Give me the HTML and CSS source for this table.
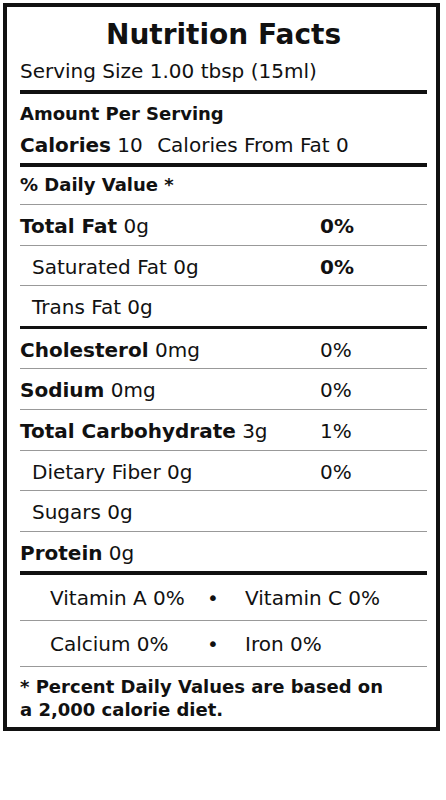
FILE: index.html
```html
<!DOCTYPE html>
<html>
<head>
  <title>Nutrition Facts</title>
  <link rel="stylesheet" href="styles.css">
</head>
<body>
  <div class="label">
    <h1 class="title">Nutrition Facts</h1>
    <div class="serving">Serving Size 1.00 tbsp (15ml)</div>

    <div class="amount">
      <div class="amount-head">Amount Per Serving</div>
      <div class="calories"><b>Calories</b> 10 <span class="fat-cal">Calories From Fat 0</span></div>
    </div>

    <div class="dv-head">% Daily Value *</div>

    <div class="row"><span><b>Total Fat</b> 0g</span><b>0%</b></div>
    <div class="row sub"><span>Saturated Fat 0g</span><b>0%</b></div>
    <div class="row sub"><span>Trans Fat 0g</span><span></span></div>
    <div class="row thick"><span><b>Cholesterol</b> 0mg</span><span>0%</span></div>
    <div class="row"><span><b>Sodium</b> 0mg</span><span>0%</span></div>
    <div class="row"><span><b>Total Carbohydrate</b> 3g</span><span>1%</span></div>
    <div class="row sub"><span>Dietary Fiber 0g</span><span>0%</span></div>
    <div class="row sub"><span>Sugars 0g</span><span></span></div>
    <div class="row"><span><b>Protein</b> 0g</span><span></span></div>

    <div class="vit-row first">
      <span>Vitamin A 0%</span><span class="dot">&bull;</span><span class="vit-right">Vitamin C 0%</span>
    </div>
    <div class="vit-row">
      <span>Calcium 0%</span><span class="dot">&bull;</span><span class="vit-right">Iron 0%</span>
    </div>

    <div class="note">* Percent Daily Values are based on<br>a 2,000 calorie diet.</div>
  </div>
</body>
</html>
```

FILE: styles.css
```css
body {
  margin: 0;
  background: #fff;
  color: #111;
  font-family: "DejaVu Sans", sans-serif;
}
.label {
  width: 437px;
  margin: 3px;
  padding: 11px 9px 6px 13px;
  border: 4px solid #111;
  box-sizing: border-box;
}
.title {
  margin: 0;
  font-size: 28px;
  line-height: 34px;
  font-weight: bold;
  text-align: center;
}
.serving {
  margin-top: 7px;
  padding-bottom: 7px;
  font-size: 20px;
  line-height: 24px;
  border-bottom: 4px solid #111;
}
.amount {
  padding: 9px 0 6px;
  border-bottom: 4px solid #111;
}
.amount-head {
  font-size: 18px;
  line-height: 22px;
  font-weight: bold;
}
.calories {
  margin-top: 8px;
  font-size: 20px;
  line-height: 24px;
}
.fat-cal {
  margin-left: 8px;
}
.dv-head {
  padding: 7px 0 8px;
  font-size: 18px;
  line-height: 22px;
  font-weight: bold;
}
.row {
  display: grid;
  grid-template-columns: 300px 1fr;
  padding: 9px 0 6.6px;
  font-size: 20px;
  line-height: 24px;
  border-top: 1px solid #999;
}
.row.sub span:first-child {
  padding-left: 12px;
}
.row.thick {
  border-top: 3px solid #111;
}
.vit-row {
  display: grid;
  grid-template-columns: 150px 26px 1fr;
  padding: 11px 0 10px 30px;
  font-size: 20px;
  line-height: 24px;
  border-top: 1px solid #999;
}
.vit-row.first {
  border-top: 4px solid #111;
}
.dot {
  text-align: center;
}
.vit-right {
  padding-left: 19px;
}
.note {
  padding-top: 7.5px;
  font-size: 18px;
  line-height: 23px;
  font-weight: bold;
  border-top: 1px solid #999;
}
```
